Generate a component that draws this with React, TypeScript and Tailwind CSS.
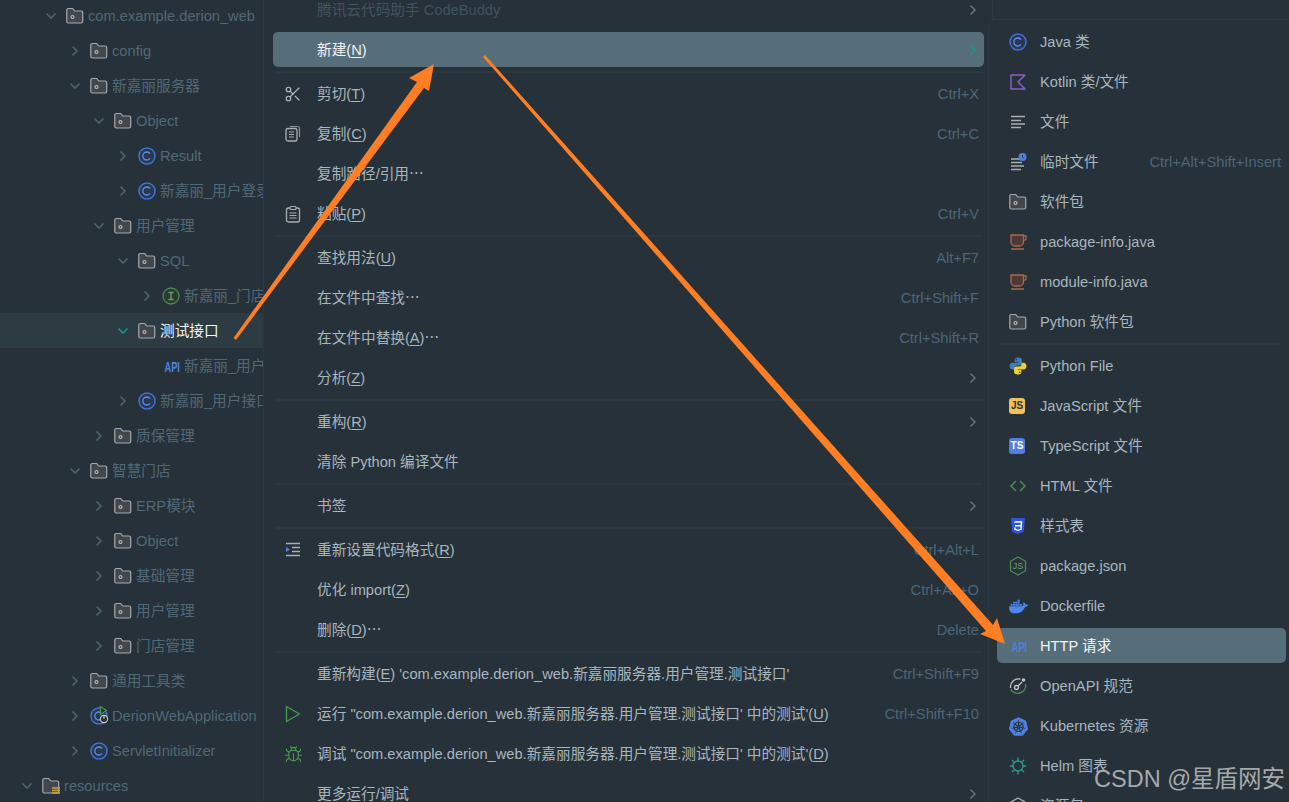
import type { ReactNode } from "react"
import { Scissors, Bug } from "lucide-react"
import { SiDocker, SiKubernetes } from "react-icons/si"

const FONT = "font-['Liberation_Sans','Noto_Sans_CJK_SC',sans-serif]"

const Svg = ({ children, size = 18 }: { children: ReactNode; size?: number }) => (
  <svg width={size} height={size} viewBox="0 0 18 18" fill="none" className="shrink-0">
    {children}
  </svg>
)

const PackageIcon = () => (
  <Svg>
    <path d="M.8 3a1.500 1.500 0 0 1 1.500-1.500h4.400l2 2.500h6.500a1.500 1.500 0 0 1 1.500 1.500v9a1.500 1.500 0 0 1-1.500 1.500H2.300A1.500 1.500 0 0 1 .8 14.500z" fill="#43474b" stroke="#a6abae" strokeWidth="1.200" />
    <circle cx="6.500" cy="10" r="1.500" stroke="#bcc0c2" strokeWidth="1.100" />
  </Svg>
)

const ClassIcon = () => (
  <Svg>
    <circle cx="9" cy="9" r="8" fill="#2a384c" stroke="#3f72da" strokeWidth="1.500" />
    <path d="M12 6.600a4 4 0 1 0 0 4.800" stroke="#5d8df0" strokeWidth="1.300" />
  </Svg>
)

const InterfaceIcon = () => (
  <Svg>
    <circle cx="9" cy="9" r="8" fill="#2b3b33" stroke="#4b8a50" strokeWidth="1.300" />
    <path d="M6.500 5.500h5M6.500 12.500h5M9 5.500v7" stroke="#5fa565" strokeWidth="1.300" />
  </Svg>
)

const ApiIcon = () => (
  <span className="-ml-[1px] inline-block w-[18px] scale-x-[0.62] text-center text-[15px] font-bold leading-none text-[#4f80e0]">API</span>
)

const SpringClassIcon = () => (
  <span className="relative block h-[18px] w-[18px]">
    <ClassIcon />
    <svg width="18" height="20" viewBox="0 0 18 20" fill="none" className="absolute left-[5px] top-[-2px]">
      <path d="M5.500 1.500v8l6-4z" fill="#27313a" stroke="#4b9a50" strokeWidth="1.200" />
      <circle cx="9" cy="14" r="3.600" fill="#27313a" stroke="#c8ccce" strokeWidth="1.100" />
      <path d="M9 10v4" stroke="#c8ccce" strokeWidth="1.100" />
    </svg>
  </span>
)

const ResourcesIcon = () => (
  <Svg>
    <path d="M.8 3a1.500 1.500 0 0 1 1.500-1.500h4.400l2 2.500h6.500a1.500 1.500 0 0 1 1.500 1.500v9a1.500 1.500 0 0 1-1.500 1.500H2.300A1.500 1.500 0 0 1 .8 14.500z" fill="#43474b" stroke="#a6abae" strokeWidth="1.200" />
    <path d="M10 11h8M10 13.500h8M10 16h8" stroke="#c9a646" strokeWidth="1.500" />
  </Svg>
)

const Chevron = ({ down, color = "#4a6472" }: { down?: boolean; color?: string }) => (
  <svg width="12" height="12" viewBox="0 0 12 12" fill="none" className="shrink-0">
    <path d={down ? "M1.500 3.500 6 8l4.500-4.500" : "M3.500 1.500 8 6l-4.500 4.500"} stroke={color} strokeWidth="1.600" />
  </svg>
)

const INDENT = ["pl-[21px]", "pl-[45px]", "pl-[69px]", "pl-[93px]", "pl-[117px]", "pl-[141px]"]

type TreeRow = { depth: number; label: string; icon: ReactNode; open?: boolean; leaf?: boolean; selected?: boolean }

const pkg = <PackageIcon />
const cls = <ClassIcon />

const treeRows: TreeRow[] = [
  { depth: 1, label: "com.example.derion_web", icon: pkg, open: true },
  { depth: 2, label: "config", icon: pkg },
  { depth: 2, label: "新嘉丽服务器", icon: pkg, open: true },
  { depth: 3, label: "Object", icon: pkg, open: true },
  { depth: 4, label: "Result", icon: cls },
  { depth: 4, label: "新嘉丽_用户登录", icon: cls },
  { depth: 3, label: "用户管理", icon: pkg, open: true },
  { depth: 4, label: "SQL", icon: pkg, open: true },
  { depth: 5, label: "新嘉丽_门店", icon: <InterfaceIcon /> },
  { depth: 4, label: "测试接口", icon: pkg, open: true, selected: true },
  { depth: 5, label: "新嘉丽_用户", icon: <ApiIcon />, leaf: true },
  { depth: 4, label: "新嘉丽_用户接口", icon: cls },
  { depth: 3, label: "质保管理", icon: pkg },
  { depth: 2, label: "智慧门店", icon: pkg, open: true },
  { depth: 3, label: "ERP模块", icon: pkg },
  { depth: 3, label: "Object", icon: pkg },
  { depth: 3, label: "基础管理", icon: pkg },
  { depth: 3, label: "用户管理", icon: pkg },
  { depth: 3, label: "门店管理", icon: pkg },
  { depth: 2, label: "通用工具类", icon: pkg },
  { depth: 2, label: "DerionWebApplication", icon: <SpringClassIcon /> },
  { depth: 2, label: "ServletInitializer", icon: cls },
  { depth: 0, label: "resources", icon: <ResourcesIcon />, open: true },
]

const Tree = () => (
  <div className="-mt-[2px] h-[804px] w-[263px] shrink-0 overflow-hidden">
    {treeRows.map((r, i) => (
      <div key={i} className={`flex h-[35px] items-center whitespace-nowrap pt-[1px] ${INDENT[r.depth]} ${r.selected ? "bg-[#2d3b43] text-[#f2f5f6]" : "text-[#4f6977]"}`}>
        {r.leaf ? <span className="w-[21px] shrink-0" /> : (
          <span className="mr-[9px] flex w-[12px] shrink-0">
            <Chevron down={r.open} color={r.selected ? "#0f9b8b" : "#4a6472"} />
          </span>
        )}
        <span className="flex w-[22px] shrink-0">{r.icon}</span>
        <span>{r.label}</span>
      </div>
    ))}
  </div>
)

const Key = ({ k }: { k: string }) => <u className="underline-offset-2">{k}</u>

const CopyIcon = () => (
  <Svg>
    <path d="M6 1.500h7.500a2 2 0 0 1 2 2V12" stroke="#8f9599" strokeWidth="1.100" />
    <rect x="2" y="3.500" width="11" height="12.500" rx="2" stroke="#a9aeb1" strokeWidth="1.300" />
    <path d="M5 7h5M5 9.500h5M5 12h5" stroke="#a9aeb1" strokeWidth="1.200" />
  </Svg>
)

const PasteIcon = () => (
  <Svg>
    <rect x="2.500" y="3" width="13" height="14" rx="2" stroke="#a9aeb1" strokeWidth="1.300" />
    <rect x="6" y="1.500" width="6" height="3" rx="1" fill="#27313a" stroke="#a9aeb1" strokeWidth="1.100" />
    <path d="M5.500 8h7M5.500 10.500h7M5.500 13h7" stroke="#a9aeb1" strokeWidth="1.200" />
  </Svg>
)

const FormatIcon = () => (
  <Svg>
    <path d="M2 2.500h14M8 6.500h8M8 10.500h8M2 14.500h14" stroke="#a9aeb1" strokeWidth="1.300" />
    <path d="M2 6v5l4-2.500z" fill="#4f80e0" />
  </Svg>
)

const PlayIcon = () => (
  <Svg>
    <path d="M2.500 1.500v15l13-7.500z" stroke="#4b9a50" strokeWidth="1.300" strokeLinejoin="round" />
  </Svg>
)

type MenuRow =
  | "sep"
  | { label: ReactNode; icon?: ReactNode; keys?: string; more?: boolean; active?: boolean; dim?: boolean }

const menuRows: MenuRow[] = [
  { label: "腾讯云代码助手 CodeBuddy", more: true, dim: true },
  { label: <>新建(<Key k="N" />)</>, more: true, active: true },
  "sep",
  { label: <>剪切(<Key k="T" />)</>, icon: <Scissors size={18} strokeWidth={1.600} className="text-[#b4b9bc]" />, keys: "Ctrl+X" },
  { label: <>复制(<Key k="C" />)</>, icon: <CopyIcon />, keys: "Ctrl+C" },
  { label: "复制路径/引用⋯" },
  { label: <>粘贴(<Key k="P" />)</>, icon: <PasteIcon />, keys: "Ctrl+V" },
  "sep",
  { label: <>查找用法(<Key k="U" />)</>, keys: "Alt+F7" },
  { label: "在文件中查找⋯", keys: "Ctrl+Shift+F" },
  { label: <>在文件中替换(<Key k="A" />)⋯</>, keys: "Ctrl+Shift+R" },
  { label: <>分析(<Key k="Z" />)</>, more: true },
  "sep",
  { label: <>重构(<Key k="R" />)</>, more: true },
  { label: "清除 Python 编译文件" },
  "sep",
  { label: "书签", more: true },
  "sep",
  { label: <>重新设置代码格式(<Key k="R" />)</>, icon: <FormatIcon />, keys: "Ctrl+Alt+L" },
  { label: <>优化 import(<Key k="Z" />)</>, keys: "Ctrl+Alt+O" },
  { label: <>删除(<Key k="D" />)⋯</>, keys: "Delete" },
  "sep",
  { label: <>重新构建(<Key k="E" />) 'com.example.derion_web.新嘉丽服务器.用户管理.测试接口'</>, keys: "Ctrl+Shift+F9" },
  { label: <>运行 "com.example.derion_web.新嘉丽服务器.用户管理.测试接口' 中的测试'(<Key k="U" />)</>, icon: <PlayIcon />, keys: "Ctrl+Shift+F10" },
  { label: <>调试 "com.example.derion_web.新嘉丽服务器.用户管理.测试接口' 中的测试'(<Key k="D" />)</>, icon: <Bug size={19} strokeWidth={1.300} className="text-[#4b9a50]" /> },
  { label: "更多运行/调试", more: true },
]

const Separator = ({ className }: { className: string }) => (
  <div className={`flex h-1 items-center ${className}`}>
    <div className="h-[2px] w-full bg-[#2c3841]" />
  </div>
)

const ContextMenu = () => (
  <div className="-mt-[10px] h-[812px] w-[725px] shrink-0 overflow-hidden border-l border-[#2c3841]">
    {menuRows.map((r, i) =>
      r === "sep" ? (
        <Separator key={i} className="pl-[11px] pr-[6px]" />
      ) : (
        <div key={i} className="h-10 pl-[9px] pr-[4px] pt-[2px]">
          <div className={`flex h-[35px] w-full items-center rounded-[5px] pl-[11px] pr-[5px] pt-[1px] ${r.active ? "bg-[#566e7a] text-[#eef2f4]" : r.dim ? "text-[#41545f]" : "text-[#a8b6bf]"}`}>
            <span className="flex w-[33px] shrink-0 items-center">{r.icon}</span>
            <span className="flex-1 whitespace-nowrap">{r.label}</span>
            {r.keys && <span className="whitespace-nowrap text-[#4d6677]">{r.keys}</span>}
            {r.more && (
              <span className="flex">
                <Chevron color={r.active ? "#0f9b8b" : r.dim ? "#6a7074" : "#5d717d"} />
              </span>
            )}
          </div>
        </div>
      )
    )}
  </div>
)

const LinesIcon = () => (
  <Svg>
    <path d="M2 3.500h14M2 7.500h10M2 11h14M2 14.500h10" stroke="#a9aeb1" strokeWidth="1.300" />
  </Svg>
)

const ScratchIcon = () => (
  <Svg>
    <path d="M2 6h10M2 9.500h11M2 13h13M2 16.500h10" stroke="#a9aeb1" strokeWidth="1.300" />
    <circle cx="13.500" cy="4" r="4" fill="#4f80e0" />
    <path d="M13.500 2v2.200l1.400 1" stroke="#27313a" strokeWidth="0.900" />
  </Svg>
)

const KotlinIcon = () => (
  <Svg>
    <path d="M2 2h14l-7 7 7 7H2z" stroke="#8a5cc4" strokeWidth="1.500" strokeLinejoin="round" />
  </Svg>
)

const JavaIcon = () => (
  <Svg>
    <path d="M2 2h12.500v7a4 4 0 0 1-4 4H6a4 4 0 0 1-4-4z" fill="#4c3a33" stroke="#a8694b" strokeWidth="1.300" />
    <path d="M14.500 3h2.500v3.500l-2.500 1M2 16h13" stroke="#a8694b" strokeWidth="1.300" />
  </Svg>
)

const PythonIcon = () => (
  <svg width="18" height="18" viewBox="0 0 16 16" className="shrink-0">
    <path d="M8 .5C5.500.5 5 1.500 5 2.500v2h3.200V5H3C1.500 5 .5 6.200.5 8S1.500 11 3 11h1.800V9.500c0-1.200 1-2 2-2h3c1 0 1.700-.8 1.700-1.700V2.500c0-1-1-2-3.500-2z" fill="#3f7fb5" />
    <path d="M8 15.500c2.500 0 3-1 3-2v-2H7.800V11H13c1.500 0 2.500-1.200 2.500-3S14.500 5 13 5h-1.800v1.500c0 1.200-1 2-2 2h-3c-1 0-1.700.8-1.700 1.700v3.300c0 1 1 2 3.500 2z" fill="#f2cf3e" />
    <circle cx="6.500" cy="2.500" r=".7" fill="#27313a" />
    <circle cx="9.500" cy="13.500" r=".7" fill="#27313a" />
  </svg>
)

const BadgeIcon = ({ text, className }: { text: string; className: string }) => (
  <span className={`flex h-4 w-4 items-center justify-center rounded-[3px] text-[10px] font-bold leading-none ${className}`}>{text}</span>
)

const HtmlIcon = () => (
  <Svg>
    <path d="M7 4 2 9l5 5M11 4l5 5-5 5" stroke="#4b8a50" strokeWidth="1.500" />
  </Svg>
)

const CssIcon = () => (
  <Svg>
    <path d="M2 1h14l-1.300 14L9 17l-5.700-2z" fill="#2f57d8" />
    <path d="M5.500 5h7l-.5 7.300L9 13.300l-3-1V10.500M6 8.800h6" stroke="#fff" strokeWidth="1.400" />
  </Svg>
)

const NodeIcon = () => (
  <span className="relative block h-[20px] w-[18px]">
    <svg width="18" height="20" viewBox="0 0 18 20" fill="none">
      <path d="M9 1l7.500 4.300v9.400L9 19l-7.500-4.300V5.300z" stroke="#4b8a50" strokeWidth="1.300" />
    </svg>
    <span className="absolute inset-0 flex items-center justify-center text-[9px] leading-none text-[#5fa565]">JS</span>
  </span>
)

const OpenApiIcon = () => (
  <Svg>
    <path d="M11.500 2.200A8 8 0 0 0 1.500 11" stroke="#c0c4c6" strokeWidth="1.300" />
    <path d="M1.800 12.500A8 8 0 0 0 16.500 7" stroke="#4b8a50" strokeWidth="1.500" />
    <circle cx="7.500" cy="10.500" r="2" stroke="#c0c4c6" strokeWidth="1.300" />
    <path d="M9 9l4-4" stroke="#c0c4c6" strokeWidth="1.300" />
    <circle cx="14.500" cy="3" r="1.800" fill="#c0c4c6" />
  </Svg>
)

const HelmIcon = () => (
  <Svg>
    <circle cx="9" cy="9" r="5" stroke="#2a9a8c" strokeWidth="1.400" />
    <path d="M9 .5V4M9 14v3.500M.8 9h3.400M13.800 9h3.400M3 3l2.500 2.500M12.500 12.500 15 15M15 3l-2.500 2.500M5.500 12.500 3 15" stroke="#2a9a8c" strokeWidth="1.400" />
  </Svg>
)

const GearIcon = () => (
  <Svg>
    <path d="M9 1l7 4v8l-7 4-7-4V5z" stroke="#a9aeb1" strokeWidth="1.300" />
    <circle cx="9" cy="9" r="2.500" stroke="#a9aeb1" strokeWidth="1.200" />
  </Svg>
)

type NewRow = "sep" | { label: string; icon: ReactNode; keys?: string; active?: boolean }

const newRows: NewRow[] = [
  { label: "Java 类", icon: cls },
  { label: "Kotlin 类/文件", icon: <KotlinIcon /> },
  { label: "文件", icon: <LinesIcon /> },
  { label: "临时文件", icon: <ScratchIcon />, keys: "Ctrl+Alt+Shift+Insert" },
  { label: "软件包", icon: pkg },
  { label: "package-info.java", icon: <JavaIcon /> },
  { label: "module-info.java", icon: <JavaIcon /> },
  { label: "Python 软件包", icon: pkg },
  "sep",
  { label: "Python File", icon: <PythonIcon /> },
  { label: "JavaScript 文件", icon: <BadgeIcon text="JS" className="bg-[#efbf5a] text-[#33302a]" /> },
  { label: "TypeScript 文件", icon: <BadgeIcon text="TS" className="bg-[#4f80e0] text-white" /> },
  { label: "HTML 文件", icon: <HtmlIcon /> },
  { label: "样式表", icon: <CssIcon /> },
  { label: "package.json", icon: <NodeIcon /> },
  { label: "Dockerfile", icon: <SiDocker size={19} className="text-[#4f87f0]" /> },
  { label: "HTTP 请求", icon: <ApiIcon />, active: true },
  { label: "OpenAPI 规范", icon: <OpenApiIcon /> },
  { label: "Kubernetes 资源", icon: <SiKubernetes size={19} className="text-[#4f80e0]" /> },
  { label: "Helm 图表", icon: <HelmIcon /> },
  { label: "资源包", icon: <GearIcon /> },
]

const NewMenu = () => (
  <div className="min-w-0 flex-1">
    <div className="ml-[4px] h-[19px] border-l border-[#2c3841]" />
    <div className="h-[783px] overflow-hidden rounded-tl-[6px] border-l border-t border-[#2c3841] pt-[2px]">
      {newRows.map((r, i) =>
        r === "sep" ? (
          <Separator key={i} className="pl-[10px] pr-[9px]" />
        ) : (
          <div key={i} className="h-10 pl-[8px] pr-[3px] pt-[2px]">
            <div className={`flex h-[35px] w-full items-center rounded-[5px] pl-[12px] pr-[5px] pt-[1px] ${r.active ? "bg-[#566e7a] text-[#f2f5f6]" : "text-[#a8b6bf]"}`}>
              <span className="flex w-[31px] shrink-0 items-center">{r.icon}</span>
              <span className="flex-1 whitespace-nowrap">{r.label}</span>
              {r.keys && <span className="whitespace-nowrap text-[#4d6677]">{r.keys}</span>}
            </div>
          </div>
        )
      )}
    </div>
  </div>
)

// the hand-drawn arrows sit on top of everything
const Arrows = () => (
  <svg width="1289" height="802" viewBox="0 0 1289 802" className="pointer-events-none absolute left-0 top-0">
    <polygon points="233.500,338 417,82 409,78 434,64 429,91 424,88 236,340" fill="#fd7e23" />
    <polygon points="485,55 993,625 997,618 1005,644 980,634 986,631 483,57" fill="#fd7e23" />
  </svg>
)

export default function App() {
  return (
    <div className={`relative flex h-[802px] w-[1289px] overflow-hidden bg-[#27313a] text-[14.67px] ${FONT}`}>
      <Tree />
      <ContextMenu />
      <NewMenu />
      <Arrows />
      <div className="absolute bottom-[11px] right-[4px] text-[23.500px] leading-none text-[#a5a9ab]">CSDN @星盾网安</div>
    </div>
  )
}
